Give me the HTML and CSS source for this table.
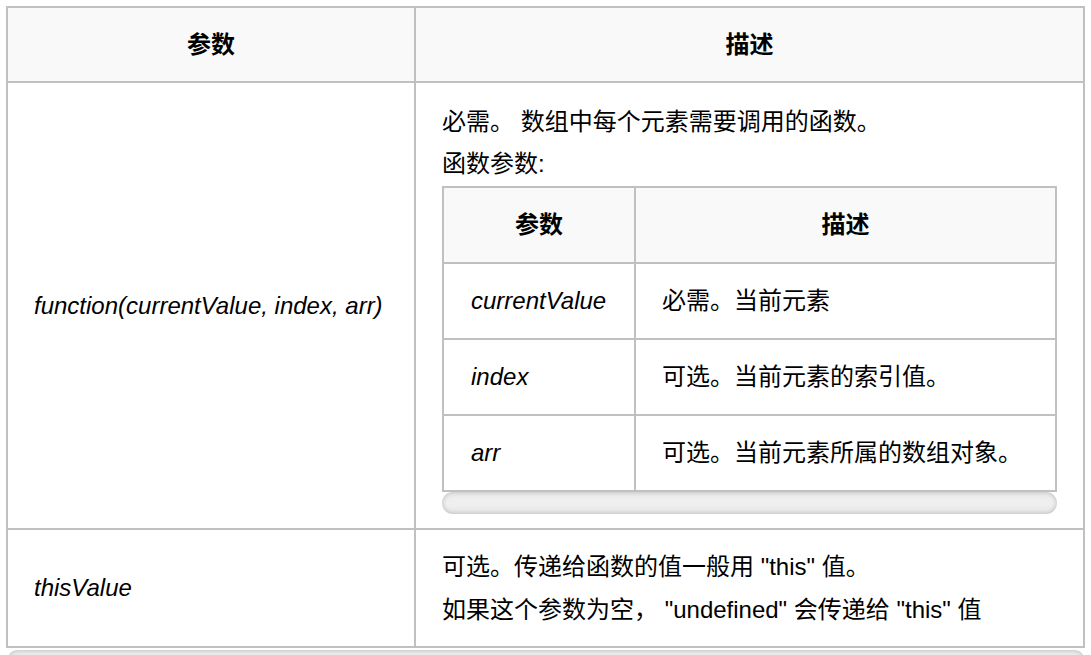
FILE: index.html
```html
<!DOCTYPE html>
<html lang="zh-CN">
<head>
<meta charset="utf-8">
<title>参数</title>
<link rel="stylesheet" href="styles.css">
</head>
<body>
<div class="wrap">
  <table class="ref">
    <colgroup><col class="c1"><col class="c2"></colgroup>
    <thead>
      <tr><th>参数</th><th>描述</th></tr>
    </thead>
    <tbody>
      <tr>
        <td><i>function(currentValue, index, arr)</i></td>
        <td class="fn-cell">
          <p>必需。 数组中每个元素需要调用的函数。</p>
          <p class="sub">函数参数:</p>
          <table class="inner">
            <colgroup><col class="ic1"><col class="ic2"></colgroup>
            <thead>
              <tr><th>参数</th><th>描述</th></tr>
            </thead>
            <tbody>
              <tr><td><i>currentValue</i></td><td>必需。当前元素</td></tr>
              <tr><td><i>index</i></td><td>可选。当前元素的索引值。</td></tr>
              <tr><td><i>arr</i></td><td>可选。当前元素所属的数组对象。</td></tr>
            </tbody>
          </table>
          <div class="scrollbar" aria-hidden="true"></div>
        </td>
      </tr>
      <tr>
        <td><i>thisValue</i></td>
        <td>
          <p>可选。传递给函数的值一般用 "this" 值。</p>
          <p>如果这个参数为空， "undefined" 会传递给 "this" 值</p>
        </td>
      </tr>
    </tbody>
  </table>
  <div class="scrollbar outer" aria-hidden="true"></div>
</div>
</body>
</html>
```
FILE: styles.css
```css
html, body {
  overflow: hidden;
}
body {
  margin: 6px 6px 0 6px;
  background: #ffffff;
  color: #000000;
  font-family: "Liberation Sans", Arial, "Noto Sans CJK SC", sans-serif;
  font-size: 24px;
  line-height: 36px;
}
.wrap {
  width: 1079px;
}
table {
  border-collapse: collapse;
  table-layout: fixed;
  width: 100%;
}
.ref .c1 { width: 408px; }
.inner .ic1 { width: 192px; }
th, td {
  border: 2px solid #c0c0c0;
  padding: 18.5px 26px;
  text-align: left;
  vertical-align: middle;
}
th {
  background: #f9f9f9;
  text-align: center;
  font-weight: bold;
}
.inner th, .inner td {
  padding: 19px 26px 19px;
}
.inner td:first-child {
  padding-left: 27px;
}
p {
  margin: 0 0 7px 0;
}
p:last-child {
  margin-bottom: 0;
}
.fn-cell {
  padding-top: 21px;
  padding-bottom: 14px;
}
.fn-cell p {
  margin-bottom: 6px;
}
.fn-cell p.sub {
  margin-bottom: 4px;
}
.scrollbar {
  height: 22px;
  border-radius: 11px;
  background: linear-gradient(#e9e9e9, #f0f0f0 50%, #e6e6e6);
  box-shadow: inset 0 0 5px rgba(0, 0, 0, 0.22);
}
.scrollbar.outer {
  margin-top: 2px;
  margin-left: 1px;
}
```
